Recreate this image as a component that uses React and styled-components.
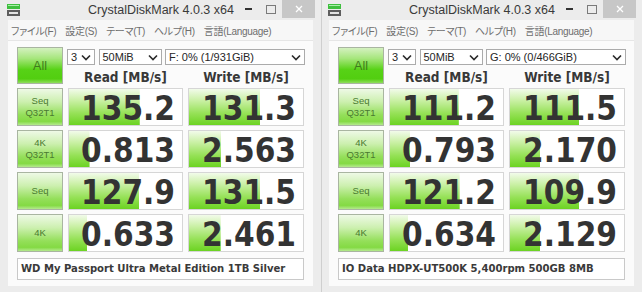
import React from "react";
import styled, { createGlobalStyle } from "styled-components";

const GlobalStyle = createGlobalStyle`
  body {
    margin: 0;
    background: #e6e6e6;
  }
`;

const Desktop = styled.div`
  display: flex;
  width: 642px;
  height: 292px;
  overflow: hidden;
`;

const Window = styled.div`
  box-sizing: border-box;
  width: 321px;
  height: 292px;
  display: flex;
  flex-direction: column;
  background: #ececec;
  border-left: 1px solid ${p => (p.$edge ? "#cfcfcf" : "#ececec")};
`;

const TitleBar = styled.div`
  height: 20px;
  display: grid;
  grid-template-columns: 1fr auto 1fr;
  align-items: center;
`;

const AppIcon = styled.svg`
  margin-left: 6px;
  display: block;
`;

const Title = styled.div`
  font: 12.5px "Liberation Sans", Arial, sans-serif;
  color: #3a3a3a;
  white-space: nowrap;
`;

const Controls = styled.div`
  justify-self: end;
  align-self: start;
  display: flex;
  margin-right: 6px;
`;

const Ctrl = styled.div`
  width: ${p => p.$w}px;
  height: 18px;
  display: flex;
  align-items: center;
  justify-content: center;
  background: ${p => p.$bg || "transparent"};
`;

const Inner = styled.div`
  flex: 1;
  display: flex;
  flex-direction: column;
  margin: 0 8px 6px 7px;
`;

const MenuBar = styled.div`
  height: 20px;
  display: flex;
  align-items: center;
  gap: 9px;
  padding-left: 3px;
  background: #f7f7f7;
  font: 10px "Liberation Sans", "Noto Sans CJK JP", sans-serif;
  font-feature-settings: "palt";
  letter-spacing: -0.3px;
  color: #6e6e6e;
  white-space: nowrap;
`;

const Client = styled.div`
  flex: 1;
  box-sizing: border-box;
  padding: 6px 9px 0 9px;
  background: #fbfbfb;
  border-top: 1px solid #e6e6e6;
`;

const TopGrid = styled.div`
  display: grid;
  grid-template-columns: 46px 115px 116px;
  grid-template-rows: 18px 19px;
  column-gap: 5px;
`;

const green = {
  all: "linear-gradient(#d4f1c0 0%, #a6e67c 30%, #57d216 62%, #52ce10 88%, #8ede5a 100%)",
  label: "linear-gradient(#eef9e6 0%, #cdf0b0 35%, #94df5a 72%, #84da44 90%, #b4e98e 100%)",
  bar: "linear-gradient(#f2fbea 0%, #c9f0a4 32%, #95e156 68%, #6cd322 100%)",
};

const GreenButton = styled.div`
  box-sizing: border-box;
  border: 1px solid #a9b5a1;
  background: ${p => (p.$all ? green.all : green.label)};
  display: flex;
  flex-direction: column;
  align-items: center;
  justify-content: center;
  font: ${p => (p.$all ? "12.5px/14px" : "9.5px/12px")} "Liberation Sans", Arial, sans-serif;
  color: ${p => (p.$all ? "#3f7b1c" : "#4a7a30")};
  grid-row: ${p => (p.$all ? "1 / 3" : "auto")};
`;

const SelectRow = styled.div`
  grid-column: 2 / 4;
  margin: 2px -1px 0 -1px;
  display: flex;
  justify-content: space-between;
`;

const Select = styled.div`
  box-sizing: border-box;
  width: ${p => p.$w}px;
  height: 16px;
  border: 1px solid #ababab;
  background: #fff;
  display: flex;
  align-items: center;
  justify-content: space-between;
  padding: 0 3px 0 3px;
  font: 11px "Liberation Sans", Arial, sans-serif;
  color: #262626;
  white-space: nowrap;
`;

const Header = styled.div`
  align-self: end;
  text-align: center;
  font: bold 13.5px/13px "DejaVu Sans Condensed", "DejaVu Sans", sans-serif;
  font-stretch: condensed;
  color: #383838;
  white-space: nowrap;
`;

const Grid = styled.div`
  display: grid;
  grid-template-columns: 46px 115px 116px;
  grid-auto-rows: 38px;
  gap: 4px 5px;
  margin-top: 4px;
`;

const Cell = styled.div`
  box-sizing: border-box;
  border: 1px solid #d6d6d6;
  background-color: #fff;
  background-image: ${green.bar};
  background-repeat: no-repeat;
  padding-right: 7px;
  display: flex;
  align-items: flex-end;
  justify-content: flex-end;
  font: bold 33px/33px "DejaVu Sans Condensed", "DejaVu Sans", sans-serif;
  font-stretch: condensed;
  color: #333;
`;

const NameBox = styled.div`
  box-sizing: border-box;
  margin-top: 6px;
  height: 22px;
  border: 1px solid #c9c9c9;
  background: #fff;
  padding-left: 3px;
  font: bold 11.2px/20px "DejaVu Sans Condensed", "DejaVu Sans", sans-serif;
  font-stretch: condensed;
  color: #3a3a3a;
  white-space: nowrap;
`;

const Chevron = () => (
  <svg width="10" height="7" viewBox="0 0 10 7">
    <polyline points="1,1.5 5,5.5 9,1.5" fill="none" stroke="#2a2a2a" strokeWidth="1.6" />
  </svg>
);

const Icon = () => (
  <AppIcon width="14" height="14" viewBox="0 0 14 14">
    <rect x="0" y="1" width="13" height="5" fill="#3fbf3f" />
    <rect x="1" y="2" width="11" height="1" fill="#a9eea9" />
    <rect x="0" y="7" width="13" height="6" fill="#5e5e5e" />
    <rect x="2" y="9" width="9" height="2" fill="#e4e4e4" />
  </AppIcon>
);

const menus = ["ファイル(F)", "設定(S)", "テーマ(T)", "ヘルプ(H)", "言語(Language)"];
const tests = [["Seq", "Q32T1"], ["4K", "Q32T1"], ["Seq"], ["4K"]];

// CrystalDiskMark meter: log scale, 0.1 .. 10000 MB/s
const meter = v => Math.max(0, Math.min(1, (Math.log10(v) + 1) / 5)) * 100;

function DiskMark({ drive, results, name, edge }) {
  return (
    <Window $edge={edge}>
      <TitleBar>
        <Icon />
        <Title>CrystalDiskMark 4.0.3 x64</Title>
        <Controls>
          <Ctrl $w={22}>
            <svg width="7" height="2"><rect width="7" height="2" fill="#333" /></svg>
          </Ctrl>
          <Ctrl $w={23}>
            <svg width="10" height="9"><rect x="0.5" y="0.5" width="9" height="8" fill="none" stroke="#7a7a7a" /></svg>
          </Ctrl>
          <Ctrl $w={33} $bg="#c7c7c7">
            <svg width="8" height="8">
              <path d="M1 1 L7 7 M7 1 L1 7" stroke="#fff" strokeWidth="1.3" />
            </svg>
          </Ctrl>
        </Controls>
      </TitleBar>
      <Inner>
        <MenuBar>
          {menus.map(m => (
            <span key={m}>{m}</span>
          ))}
        </MenuBar>
        <Client>
          <TopGrid>
            <GreenButton $all>All</GreenButton>
            <SelectRow>
              <Select $w={28}>3<Chevron /></Select>
              <Select $w={63}>50MiB<Chevron /></Select>
              <Select $w={140}>{drive}<Chevron /></Select>
            </SelectRow>
            <Header>Read [MB/s]</Header>
            <Header>Write [MB/s]</Header>
          </TopGrid>
          <Grid>
            {tests.map((t, i) => (
              <React.Fragment key={i}>
                <GreenButton>
                  {t.map(l => (
                    <span key={l}>{l}</span>
                  ))}
                </GreenButton>
                {results[i].map((v, j) => (
                  <Cell key={j} style={{ backgroundSize: `${meter(parseFloat(v))}% 100%` }}>
                    {v}
                  </Cell>
                ))}
              </React.Fragment>
            ))}
          </Grid>
          <NameBox>{name}</NameBox>
        </Client>
      </Inner>
    </Window>
  );
}

export default function App() {
  return (
    <>
      <GlobalStyle />
      <Desktop>
        <DiskMark
          drive="F: 0% (1/931GiB)"
          results={[["135.2", "131.3"], ["0.813", "2.563"], ["127.9", "131.5"], ["0.633", "2.461"]]}
          name="WD My Passport Ultra Metal Edition 1TB Silver"
        />
        <DiskMark
          edge
          drive="G: 0% (0/466GiB)"
          results={[["111.2", "111.5"], ["0.793", "2.170"], ["121.2", "109.9"], ["0.634", "2.129"]]}
          name="IO Data HDPX-UT500K 5,400rpm 500GB 8MB"
        />
      </Desktop>
    </>
  );
}
